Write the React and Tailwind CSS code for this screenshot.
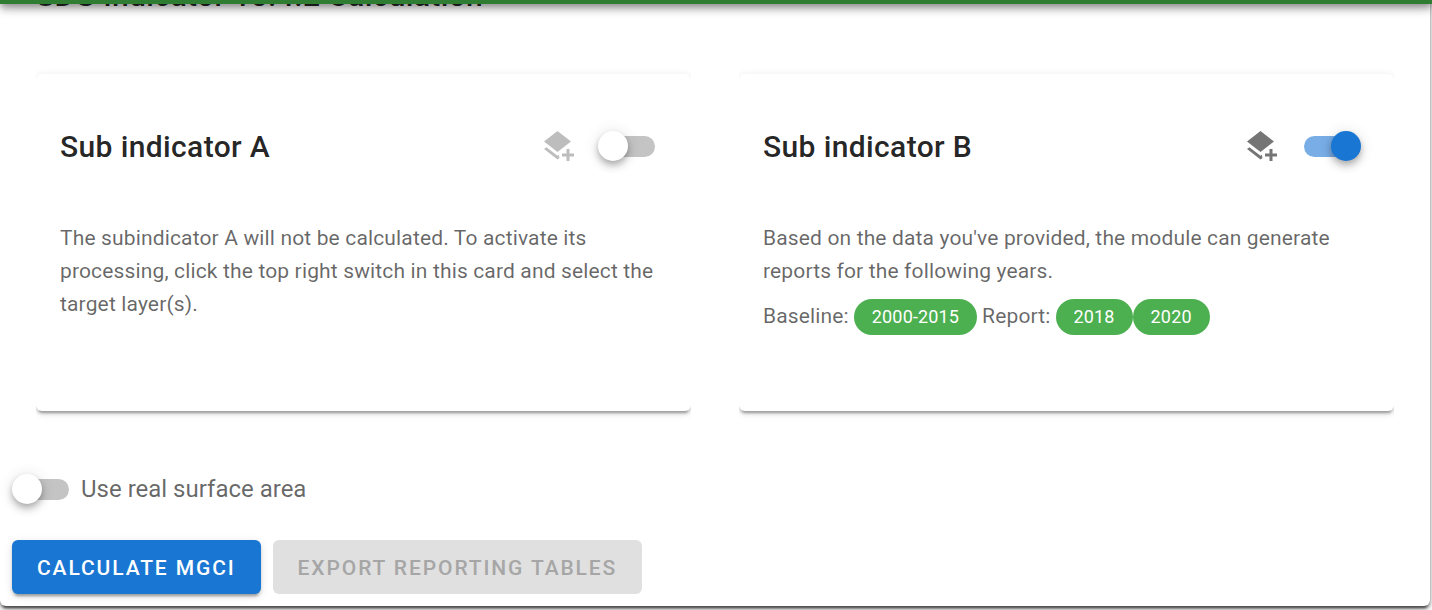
import React, { useState } from "react";

function Switch({ checked, onChange, id, label }) {
  return (
    <span className="grid h-[30px] w-[60px] shrink-0 items-center">
      <input
        id={id}
        type="checkbox"
        role="switch"
        aria-label={label}
        checked={checked}
        onChange={(e) => onChange(e.target.checked)}
        className="peer z-10 col-start-1 row-start-1 h-full w-full cursor-pointer appearance-none"
      />
      <span className="col-start-1 row-start-1 mx-[3px] h-[21px] rounded-full bg-[#c4c4c4] peer-checked:bg-[#78ade6]" />
      <span className="col-start-1 row-start-1 size-[30px] justify-self-start rounded-full bg-white shadow-[0_3px_6px_-1px_rgba(0,0,0,0.2),0_6px_8px_0_rgba(0,0,0,0.14),0_1px_15px_0_rgba(0,0,0,0.12)] peer-checked:justify-self-end peer-checked:bg-[#1976d2]" />
    </span>
  );
}

function LayersPlus() {
  return (
    <svg viewBox="0 0 24 24" className="size-9" fill="currentColor" aria-hidden="true">
      <path d="M17,14H19V17H22V19H19V22H17V19H14V17H17V14M11,16L2,9L11,2L20,9L11,16M11,18.54L12,17.75V18C12,18.71 12.12,19.39 12.35,20L11,21.07L2,14.07L3.62,12.81L11,18.54Z" />
    </svg>
  );
}

function IndicatorCard({ title, checked, onChange, children }) {
  return (
    <section className="min-h-[337px] min-w-0 rounded-md bg-white px-6 pt-12 pb-6 shadow-[0_5px_2px_-3px_rgba(0,0,0,0.2),0_3px_3px_0_rgba(0,0,0,0.14),0_2px_8px_0_rgba(0,0,0,0.12)] [clip-path:inset(-16px_0)]">
      <header className="flex h-12 items-center pr-[9px]">
        <h2 className="flex-1 pt-0.5 text-[30px] leading-12 font-medium tracking-[0.0125em] text-black/87">
          {title}
        </h2>
        <button
          type="button"
          aria-label={`Select layers for ${title}`}
          disabled={!checked}
          className="mr-[21px] text-black/54 disabled:text-black/26"
        >
          <LayersPlus />
        </button>
        <Switch checked={checked} onChange={onChange} label={`Calculate ${title}`} />
      </header>
      <div className="pt-[52px] text-[21px] leading-[33px] tracking-[0.007em] text-black/60">
        {children}
      </div>
    </section>
  );
}

function Chip({ children }) {
  return (
    <span className="flex h-9 items-center rounded-full bg-[#4caf50] px-[18px] text-lg text-white">
      {children}
    </span>
  );
}

export default function App() {
  const [subA, setSubA] = useState(false);
  const [subB, setSubB] = useState(true);
  const [realArea, setRealArea] = useState(false);

  return (
    <div className="overflow-hidden bg-white pr-0.5 pb-1 font-[Roboto,sans-serif]">
      <div className="fixed inset-x-0 -top-15 z-20 h-16 bg-[#2e7d32] shadow-[0_3px_6px_-1px_rgba(0,0,0,0.24),0_6px_8px_0_rgba(0,0,0,0.2),0_1px_15px_0_rgba(0,0,0,0.16)]" />
      <main className="-mt-7 rounded-md bg-white px-3 pb-3 shadow-[0_5px_2px_-3px_rgba(0,0,0,0.4),0_3px_3px_0_rgba(0,0,0,0.35),0_2px_8px_0_rgba(0,0,0,0.3)]">
        <h1 className="px-6 text-[30px] leading-12 font-medium tracking-[0.0125em] text-black/87">
          SDG Indicator 15.4.2 Calculation
        </h1>
        <div className="grid grid-cols-2 gap-12 px-6 pt-[54px]">
          <IndicatorCard title="Sub indicator A" checked={subA} onChange={setSubA}>
            <p>
              The subindicator A will not be calculated. To activate its processing, click the top
              right switch in this card and select the target layer(s).
            </p>
          </IndicatorCard>
          <IndicatorCard title="Sub indicator B" checked={subB} onChange={setSubB}>
            <p>
              Based on the data you've provided, the module can generate reports for the following
              years.
            </p>
            <div className="flex flex-wrap items-baseline pt-[11px]">
              <span className="mr-[5px]">Baseline:</span>
              <Chip>2000-2015</Chip>
              <span className="mx-[5px]">Report:</span>
              <Chip>2018</Chip>
              <Chip>2020</Chip>
            </div>
          </IndicatorCard>
        </div>
        <div className="flex items-center gap-[9px] pt-[63px]">
          <Switch id="real-area" checked={realArea} onChange={setRealArea} />
          <label htmlFor="real-area" className="text-2xl leading-[30px] text-black/60">
            Use real surface area
          </label>
        </div>
        <div className="flex gap-3 pt-9">
          <button
            type="button"
            className="h-[54px] rounded-md bg-[#1976d2] px-[25px] pt-0.5 text-[21px] leading-8 font-medium tracking-[0.09em] text-white uppercase shadow-[0_5px_2px_-3px_rgba(0,0,0,0.2),0_3px_3px_0_rgba(0,0,0,0.14),0_2px_8px_0_rgba(0,0,0,0.12)]"
          >
            Calculate MGCI
          </button>
          <button
            type="button"
            disabled
            className="h-[54px] rounded-md bg-[#e0e0e0] px-[25px] pt-0.5 text-[21px] leading-8 font-medium tracking-[0.09em] text-[#a6a6a6] uppercase"
          >
            Export reporting tables
          </button>
        </div>
      </main>
    </div>
  );
}
